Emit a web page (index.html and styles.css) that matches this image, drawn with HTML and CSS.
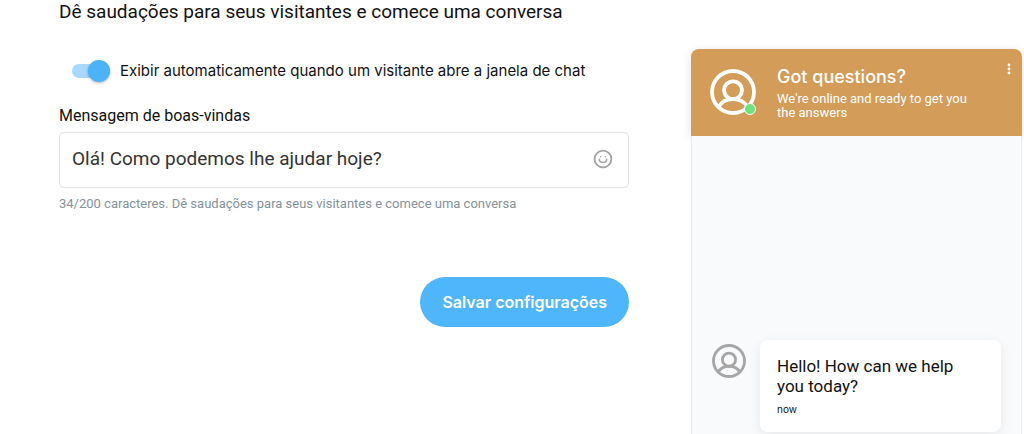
FILE: index.html
```html
<!DOCTYPE html>
<html lang="pt-BR">
<head>
    <meta charset="UTF-8">
    <meta name="viewport" content="width=device-width, initial-scale=1.0">
    <title>Mensagem de boas-vindas</title>
    <link rel="stylesheet" href="styles.css">
</head>
<body>
    <main class="page">
        <form class="settings">
            <h1 class="settings-title">Dê saudações para seus visitantes e comece uma conversa</h1>
            <div class="toggle-row">
                <input type="checkbox" class="toggle" id="autoShow" name="autoShow" checked>
                <label for="autoShow">Exibir automaticamente quando um visitante abre a janela de chat</label>
            </div>
            <label class="field-label" for="welcomeMessage">Mensagem de boas-vindas</label>
            <div class="field">
                <input type="text" id="welcomeMessage" name="welcomeMessage" maxlength="200" value="Olá! Como podemos lhe ajudar hoje?">
                <button type="button" class="emoji-button" aria-label="Emoji">
                    <svg width="20" height="20" viewBox="0 0 20 20" fill="none" stroke="#a3a3a3" stroke-linecap="round">
                        <circle cx="10" cy="10" r="8.4" stroke-width="1.8"/>
                        <path d="M6.4 10.2v.6c0 1.7 1.5 2.6 3.6 2.6s3.6-.9 3.6-2.6v-.6" stroke-width="1.5"/>
                        <path d="M7.6 7.7v.1M12.4 7.7v.1" stroke-width="1.4"/>
                    </svg>
                </button>
            </div>
            <p class="hint">34/200 caracteres. Dê saudações para seus visitantes e comece uma conversa</p>
            <button type="button" class="save-button">Salvar configurações</button>
        </form>

        <section class="chat" lang="en">
            <header class="chat-header">
                <div class="agent">
                    <svg width="46" height="46" viewBox="0 0 46 46" fill="none" stroke="#fff" stroke-width="3.8">
                        <circle cx="23" cy="23" r="21"/>
                        <circle cx="23" cy="21.2" r="8.9"/>
                        <path d="M8.4 38.2c2.6-5 8-8.1 14.6-8.1s12 3.1 14.6 8.1"/>
                    </svg>
                    <span class="status"></span>
                </div>
                <div class="chat-intro">
                    <h2>Got questions?</h2>
                    <p>We're online and ready to get you the answers</p>
                </div>
                <button type="button" class="menu-button" aria-label="Menu">
                    <svg width="4" height="12" viewBox="0 0 4 12" fill="#fff">
                        <circle cx="2" cy="2" r="1.4"/>
                        <circle cx="2" cy="6" r="1.4"/>
                        <circle cx="2" cy="10" r="1.4"/>
                    </svg>
                </button>
            </header>
            <div class="chat-body">
                <div class="message">
                    <svg class="avatar" width="34" height="34" viewBox="0 0 46 46" fill="none" stroke="#a6a6a6" stroke-width="3.8">
                        <circle cx="23" cy="23" r="21"/>
                        <circle cx="23" cy="21.2" r="8.9"/>
                        <path d="M8.4 38.2c2.6-5 8-8.1 14.6-8.1s12 3.1 14.6 8.1"/>
                    </svg>
                    <div class="bubble">
                        <p>Hello! How can we help you today?</p>
                        <time>now</time>
                    </div>
                </div>
            </div>
        </section>
    </main>
</body>
</html>
```
FILE: styles.css
```css
* {
    box-sizing: border-box;
}
body {
    margin: 0;
    background-color: #fff;
    color: #111;
    font-family: Roboto, "Liberation Sans", sans-serif;
}
h1, h2, p {
    margin: 0;
    font-weight: 400;
}
button, input {
    font-family: inherit;
}
button {
    padding: 0;
    border: none;
    background: none;
    cursor: pointer;
}
svg {
    display: block;
}
.page {
    display: grid;
    grid-template-columns: 570fr 331fr;
    column-gap: 62px;
    min-height: 100vh;
    padding: 0 2px 0 59px;
}
.settings {
    display: flex;
    flex-direction: column;
}
.toggle-row,
.save-button,
.chat-intro h2,
.bubble time {
    font-family: Inter, "Liberation Sans", sans-serif;
}
.settings-title {
    font-size: 19px;
    line-height: 24px;
}
.toggle-row {
    display: flex;
    align-items: center;
    gap: 10px;
    margin-top: 34px;
    padding-left: 13px;
    font-size: 15px;
    line-height: 26px;
}
.toggle {
    display: flex;
    align-items: center;
    justify-content: flex-end;
    width: 38px;
    height: 14px;
    margin: 0;
    border-radius: 7px;
    background-color: #a6d9fb;
    appearance: none;
    cursor: pointer;
}
.toggle::before {
    content: "";
    flex: none;
    width: 22px;
    height: 22px;
    border-radius: 50%;
    background-color: #4db3f8;
    box-shadow: 0 1px 3px rgba(0, 0, 0, 0.3);
}
.toggle:not(:checked) {
    justify-content: flex-start;
}
.field-label {
    margin-top: 20px;
    font-size: 16px;
    line-height: 24px;
}
.field {
    display: flex;
    align-items: center;
    height: 56px;
    margin-top: 4px;
    padding: 0 15px 3px 12px;
    border: 1px solid #e3e3e3;
    border-radius: 5px;
}
.field input {
    flex: 1;
    min-width: 0;
    padding: 0;
    border: none;
    outline: none;
    background: none;
    color: #333;
    font-size: 19px;
}
.hint {
    margin-top: 8px;
    color: #84929b;
    font-size: 13px;
    line-height: 16px;
}
.save-button {
    align-self: flex-end;
    height: 50px;
    margin-top: 65px;
    padding: 0 22px;
    border-radius: 25px;
    background-color: #4fb6fb;
    color: #fff;
    font-size: 16px;
    font-weight: 600;
}
.chat {
    display: flex;
    flex-direction: column;
    margin-top: 49px;
}
.chat-header {
    display: flex;
    align-items: flex-start;
    padding: 16px 11px 16px 19px;
    border-radius: 8px 8px 0 0;
    background-color: #d39c59;
    box-shadow: 0 2px 10px rgba(0, 0, 0, 0.12);
    color: #fff;
}
.agent {
    position: relative;
    margin-top: 4px;
}
.status {
    position: absolute;
    right: 0;
    bottom: 0;
    width: 12px;
    height: 12px;
    border: 1px solid #fff;
    border-radius: 50%;
    background-color: #6fe07a;
}
.chat-intro {
    flex: 1;
    margin-left: 21px;
    padding-right: 26px;
}
.chat-intro h2 {
    font-size: 18px;
    font-weight: 500;
    line-height: 24px;
}
.chat-intro p {
    margin-top: 3px;
    font-size: 13px;
    line-height: 14px;
}
.menu-button {
    margin-top: -2px;
}
.chat-body {
    display: flex;
    flex: 1;
    flex-direction: column;
    justify-content: flex-end;
    padding: 20px 20px 2px;
    border: solid #e8ecee;
    border-width: 0 1px;
    background-color: #f9fafc;
}
.message {
    display: flex;
    align-items: flex-start;
    gap: 14px;
}
.avatar {
    flex: none;
    margin-top: 4px;
}
.bubble {
    flex: 1;
    padding: 16px 17px 15px;
    border-radius: 8px;
    background-color: #fff;
    box-shadow: 0 3px 12px rgba(0, 0, 0, 0.08);
}
.bubble p {
    font-size: 17px;
    line-height: 20px;
}
.bubble time {
    display: block;
    margin-top: 5px;
    font-size: 10px;
    line-height: 16px;
}
```
